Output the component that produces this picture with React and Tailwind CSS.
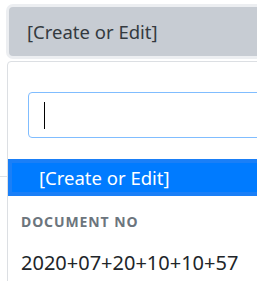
import React from 'react';

function App() {
  return (
    <div className="relative h-[281px] w-[257px] overflow-hidden bg-white font-['Noto_Sans',sans-serif]">
      {/* page behind the dropdown */}
      <div className="pl-[9px] pt-[7px]">
        <div className="flex h-[49px] w-[300px] items-center rounded-[4px] bg-[#c7ccd3] pl-[18px] text-[18.5px] text-[#343a40] shadow-[0_0_0_3px_#eceef1]">
          [Create or Edit]
        </div>
      </div>
      <div className="mt-[120px] border-b border-[#dee2e6]"></div>

      {/* dropdown menu */}
      <div className="absolute left-[7px] top-[61px] w-[300px] rounded-t-[4px] border border-[#dcdfe3] bg-white pb-4">
        <div className="px-5 pt-[30px]">
          <div className="flex h-[46px] items-center rounded-[4px] border border-[#80bdff] pl-[15px]">
            <span className="h-[27px] w-px bg-black"></span>
          </div>
        </div>
        <div className="mt-[21px] bg-[#1a7ff7] p-[4px]">
          <div className="flex h-[29px] items-center bg-[#007bff] pl-[27px] text-[18.5px] text-white">
            [Create or Edit]
          </div>
        </div>
        <div className="px-[13px] pt-[15px] text-[14px] font-bold uppercase tracking-[0.9px] text-[#6c757d]">
          Document No
        </div>
        <div className="px-[13px] pt-[16px] text-[20px] text-[#212529]">
          2020+07+20+10+10+57
        </div>
      </div>
    </div>
  );
}

export default App;
